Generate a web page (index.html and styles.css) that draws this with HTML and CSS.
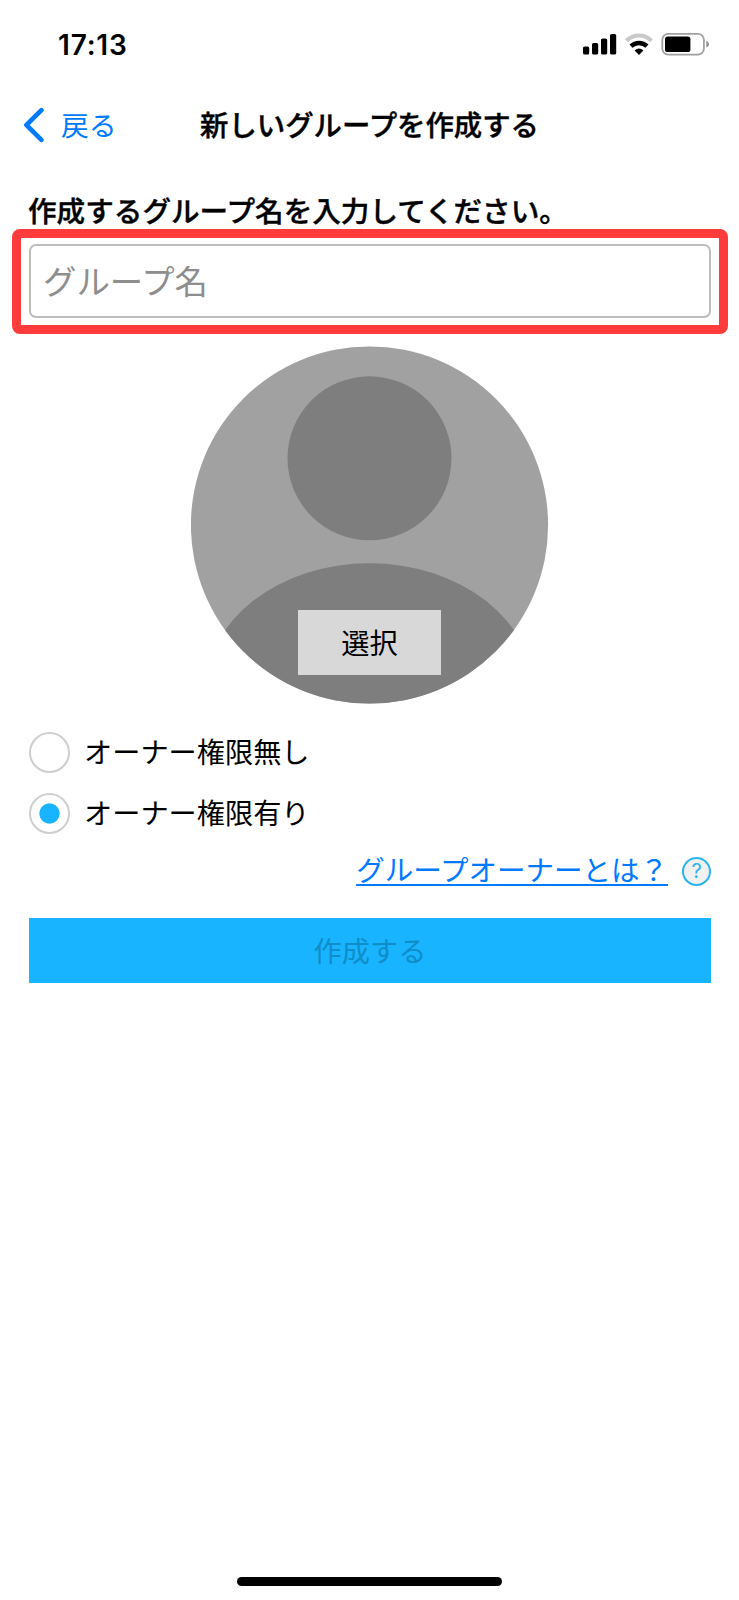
FILE: index.html
```
<!DOCTYPE html>
<html lang="ja">
<head>
    <meta charset="UTF-8">
    <meta name="viewport" content="width=device-width, initial-scale=1.0">
    <title>新しいグループを作成する</title>
    <link rel="stylesheet" href="styles.css">
</head>
<body>
    <div class="status-bar">
        <span class="time">17:13</span>
        <svg class="status-icons" width="128" height="28" viewBox="0 0 128 28">
            <rect x="1" y="14.5" width="6.2" height="8" rx="1.6"/>
            <rect x="10" y="11" width="6.2" height="11.5" rx="1.6"/>
            <rect x="19" y="6.5" width="6.2" height="16" rx="1.6"/>
            <rect x="28" y="2" width="6.2" height="20.5" rx="1.6"/>
            <path d="M44.5 8.9A17.4 17.4 0 0 1 69.5 8.9" fill="none" stroke="#c9c9c9" stroke-width="4"/>
            <path d="M49 14.2A11.6 11.6 0 0 1 65 14.2" fill="none" stroke="#000" stroke-width="4.4"/>
            <path d="M52.6 18.6Q57 14.6 61.4 18.6L57 23Z"/>
            <rect x="80.3" y="1.8" width="41.6" height="20.8" rx="6" fill="none" stroke="#a0a0a0" stroke-width="1.8"/>
            <rect x="83" y="4.6" width="25.4" height="15.4" rx="2.6"/>
            <path d="M124.3 8.8Q127 10 127 12.2T124.3 15.6Z" fill="#8e8e8e"/>
        </svg>
    </div>

    <header class="nav">
        <a class="back" href="#">
            <svg width="21" height="36" viewBox="0 0 21 36">
                <path d="M18.4 3.2L3.4 18L18.4 32.8" fill="none" stroke="#007aff" stroke-width="4.6" stroke-linecap="round" stroke-linejoin="round"/>
            </svg>
            <span>戻る</span>
        </a>
        <h1>新しいグループを作成する</h1>
    </header>

    <form class="group-form">
        <label class="name-label" for="groupName">作成するグループ名を入力してください。</label>
        <div class="highlight">
            <input type="text" id="groupName" class="name-input" placeholder="グループ名">
        </div>

        <div class="avatar">
            <svg width="358" height="358" viewBox="0 0 358 358">
                <clipPath id="round"><circle cx="178.5" cy="179" r="178.6"/></clipPath>
                <g clip-path="url(#round)">
                    <rect width="358" height="358" fill="#a1a1a1"/>
                    <circle cx="178.5" cy="112.3" r="82" fill="#7e7e7e"/>
                    <ellipse cx="178.5" cy="346.3" rx="165" ry="129" fill="#7e7e7e"/>
                </g>
            </svg>
            <button type="button" class="select-button">選択</button>
        </div>

        <label class="option">
            <input type="radio" name="owner" value="0">
            <span>オーナー権限無し</span>
        </label>
        <label class="option">
            <input type="radio" name="owner" value="1" checked>
            <span>オーナー権限有り</span>
        </label>

        <div class="help">
            <a href="#">グループオーナーとは？</a>
            <span class="help-icon">?</span>
        </div>

        <button type="submit" class="create-button" disabled>作成する</button>
    </form>

    <div class="home-bar"></div>
</body>
</html>
```

FILE: styles.css
```
* {
    box-sizing: border-box;
}

body {
    margin: 0;
    height: 1600px;
    display: flex;
    flex-direction: column;
    background-color: #fff;
    color: #000;
    font-family: "Noto Sans CJK JP", sans-serif;
    font-size: 28.2px;
    line-height: 40px;
}

button, input {
    font-family: inherit;
    font-size: inherit;
}

.status-bar {
    height: 90px;
    padding: 0 29px 0 58px;
    display: flex;
    justify-content: space-between;
    align-items: center;
}

.time {
    font-family: Inter, sans-serif;
    font-size: 28px;
    font-weight: 600;
    letter-spacing: 0.8px;
}

.status-icons {
    margin-top: 2px;
}

.nav {
    height: 70px;
    padding: 0 23px;
    display: grid;
    grid-template-columns: 1fr auto 1fr;
    align-items: center;
}

.nav h1 {
    margin: -2px 0 0;
    font-size: 28.4px;
    font-weight: 500;
    -webkit-text-stroke: 0.4px #000;
}

.back {
    display: flex;
    align-items: center;
    gap: 17px;
    color: #007aff;
    font-size: 27.8px;
    text-decoration: none;
}

.back span {
    margin-top: -2px;
}

.group-form {
    padding: 30px 28px 0 29px;
    display: flex;
    flex-direction: column;
}

.name-label {
    height: 39px;
    font-size: 28.6px;
    font-weight: 500;
    margin-left: -1px;
    -webkit-text-stroke: 0.4px #000;
}

.highlight {
    height: 105px;
    margin: 0 -17px;
    padding: 6px 8px;
    border: 9px solid #ff3b3b;
    border-radius: 8px;
}

.name-input {
    display: block;
    width: 100%;
    height: 74px;
    padding: 0 12px 4px;
    border: 2px solid #bdbdbd;
    border-radius: 7px;
    outline: none;
    font-size: 33.4px;
}

.name-input::placeholder {
    color: #8e8e8e;
}

.avatar {
    position: relative;
    width: 358px;
    height: 358px;
    margin: 12px auto 27px;
}

.avatar svg {
    display: block;
}

.select-button {
    position: absolute;
    left: 107px;
    top: 264px;
    width: 143px;
    height: 65px;
    padding: 0 0 3px;
    border: none;
    background-color: #d8d8d8;
    color: #000;
}

.option {
    height: 42px;
    margin-bottom: 19px;
    display: flex;
    align-items: center;
    gap: 14px;
}

.option span {
    margin-top: -3px;
}

.option input {
    appearance: none;
    width: 41px;
    height: 41px;
    margin: 0;
    border: 2px solid #cecece;
    border-radius: 50%;
}

.option input:checked {
    background: radial-gradient(circle, #19b4ff 9.7px, #fff 10.5px);
}

.help {
    height: 40px;
    margin: -2px 0 27px;
    display: flex;
    justify-content: flex-end;
    align-items: center;
    gap: 14px;
}

.help a {
    margin-top: -4px;
    color: #007aff;
    font-size: 28.5px;
    text-decoration-thickness: 2px;
    text-underline-offset: 3px;
}

.help-icon {
    width: 29px;
    height: 29px;
    border: 2px solid #2bb5ec;
    border-radius: 50%;
    background-color: #f1f1f1;
    color: #2bb5ec;
    font-family: Inter, sans-serif;
    font-size: 20px;
    line-height: 25px;
    text-align: center;
}

.create-button {
    height: 65px;
    padding: 0 0 3px;
    border: none;
    background-color: #19b4ff;
    color: #108cc9;
}

.home-bar {
    width: 265px;
    height: 9px;
    margin: auto auto 14px;
    border-radius: 5px;
    background-color: #000;
}
```
